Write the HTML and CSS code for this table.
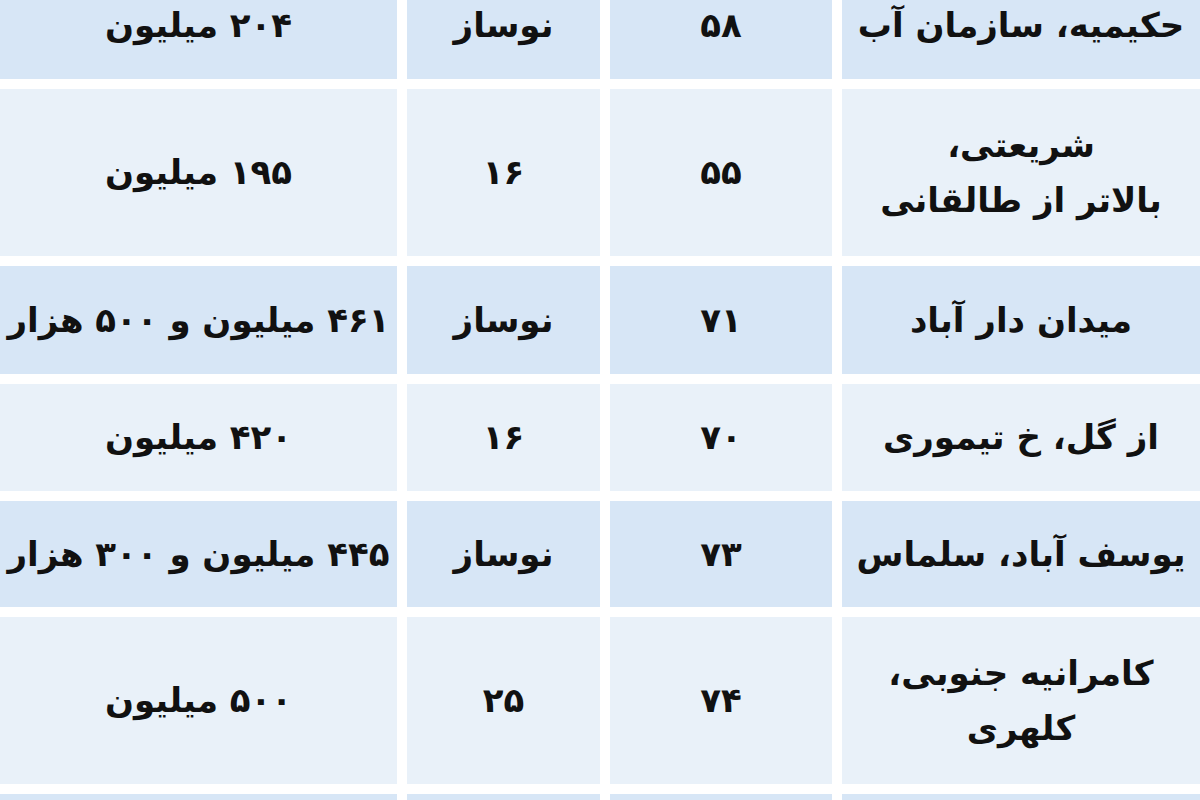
FILE: index.html
```html
<!DOCTYPE html>
<html lang="fa" dir="rtl">
<head>
<meta charset="utf-8">
<link rel="stylesheet" href="styles.css">
</head>
<body>
<div class="table">
  <div class="cell blue">حکیمیه، سازمان آب</div>
  <div class="cell blue">۵۸</div>
  <div class="cell blue">نوساز</div>
  <div class="cell blue">۲۰۴ میلیون</div>

  <div class="cell light">شریعتی،<br>بالاتر از طالقانی</div>
  <div class="cell light">۵۵</div>
  <div class="cell light">۱۶</div>
  <div class="cell light">۱۹۵ میلیون</div>

  <div class="cell blue">میدان دار آباد</div>
  <div class="cell blue">۷۱</div>
  <div class="cell blue">نوساز</div>
  <div class="cell blue">۴۶۱ میلیون و ۵۰۰ هزار</div>

  <div class="cell light">از گل، خ تیموری</div>
  <div class="cell light">۷۰</div>
  <div class="cell light">۱۶</div>
  <div class="cell light">۴۲۰ میلیون</div>

  <div class="cell blue">یوسف آباد، سلماس</div>
  <div class="cell blue">۷۳</div>
  <div class="cell blue">نوساز</div>
  <div class="cell blue">۴۴۵ میلیون و ۳۰۰ هزار</div>

  <div class="cell light">کامرانیه جنوبی،<br>کلهری</div>
  <div class="cell light">۷۴</div>
  <div class="cell light">۲۵</div>
  <div class="cell light">۵۰۰ میلیون</div>

  <div class="cell blue"></div>
  <div class="cell blue"></div>
  <div class="cell blue"></div>
  <div class="cell blue"></div>
</div>
</body>
</html>
```
FILE: styles.css
```css
html, body {
  margin: 0;
  padding: 0;
  background: #ffffff;
  overflow: hidden;
}

body {
  width: 1200px;
  height: 800px;
  font-family: "DejaVu Sans", sans-serif;
}

.table {
  direction: rtl;
  display: grid;
  grid-template-columns: 358px 222px 193px 397px;
  grid-template-rows: 107px 167px 108px 107px 106px 167px 60px;
  gap: 10px;
  margin-top: -28px;
  height: 860px;
}

.cell {
  display: flex;
  align-items: center;
  justify-content: center;
  text-align: center;
  font-size: 34px;
  font-weight: bold;
  line-height: 1.6;
  color: #111111;
  white-space: nowrap;
}

.blue {
  background: #d7e6f6;
}

.light {
  background: #e9f1f9;
}
```
